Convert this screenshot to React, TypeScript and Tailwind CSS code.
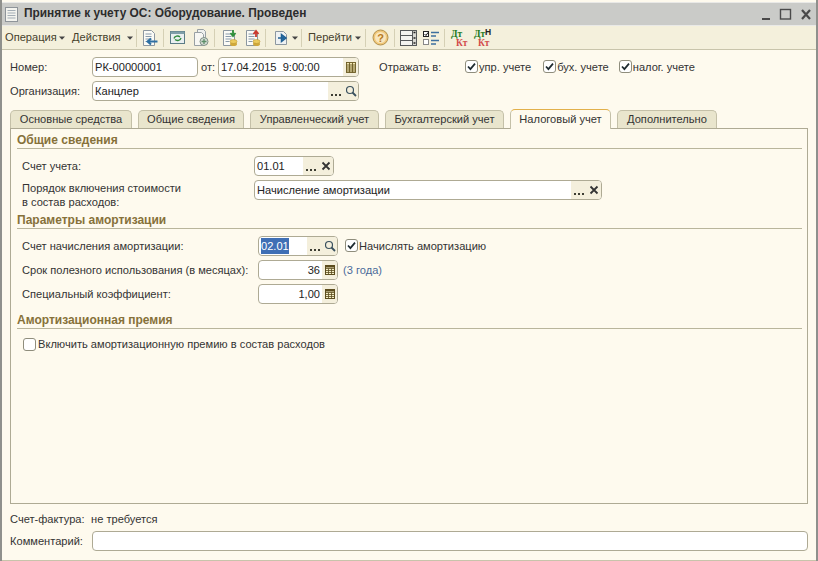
import React from "react";

const border = "border border-[#aeaa94]";

function Sep({ ml = "ml-0" }: { ml?: string }) {
  return <div className={`w-px h-[18px] bg-[#d5d0b5] shrink-0 ${ml}`} />;
}

function Caret() {
  return (
    <svg width="6" height="4" viewBox="0 0 6 4" className="shrink-0">
      <path d="M0 0.5h6L3 3.8z" fill="#444" />
    </svg>
  );
}

function Dots() {
  return (
    <svg width="12" height="12" viewBox="0 0 12 12">
      <path d="M1 9h2v2H1zM5 9h2v2H5zM9 9h2v2H9z" fill="#3d3d33" />
    </svg>
  );
}
function Lens() {
  return (
    <svg width="12" height="12" viewBox="0 0 12 12" fill="none" stroke="#39505e" strokeWidth="1.2">
      <circle cx="5" cy="5" r="3.500" />
      <path d="M7.500 7.500L11 11" strokeWidth="1.800" />
    </svg>
  );
}
function Cross() {
  return (
    <svg width="10" height="10" viewBox="0 0 10 10" fill="none" stroke="#333" strokeWidth="1.800">
      <path d="M1.500 1.500l7 7M8.500 1.500l-7 7" />
    </svg>
  );
}
function Calc() {
  return (
    <svg width="12" height="12" viewBox="0 0 12 12" fill="none" stroke="#5c4d1e">
      <rect x="1.500" y="1.500" width="9" height="9" fill="#f6efc8" />
      <path d="M1.500 4.500h9M1.500 6.500h9M1.500 8.500h9M4.500 4.500v6M7.500 4.500v6" strokeWidth="0.800" />
      <path d="M1.500 2.800h9" strokeWidth="1.600" />
    </svg>
  );
}
function DateIcon() {
  return (
    <svg width="12" height="13" viewBox="0 0 12 13" fill="none" stroke="#6a5a22" strokeWidth="0.900">
      <rect x="1.500" y="1.500" width="9" height="10" fill="#f3e8b5" />
      <path d="M1.500 4h9M1.500 6h9M1.500 8h9M1.500 10h9M4.500 1.500v10M7.500 1.500v10" />
    </svg>
  );
}

function Btn({ children }: { children: React.ReactNode }) {
  return (
    <div className="w-[15px] self-stretch flex items-center justify-center bg-[#f4efdc] shrink-0">
      {children}
    </div>
  );
}

function Field({
  w,
  children,
  btns,
  right,
  className = "",
}: {
  w: string;
  children?: React.ReactNode;
  btns?: React.ReactNode;
  right?: boolean;
  className?: string;
}) {
  return (
    <div className={`${w} h-[20px] flex items-stretch rounded-[4px] bg-white ${border} overflow-hidden shrink-0 ${className}`}>
      <div className={`flex-1 min-w-0 flex items-center whitespace-pre px-[2px] text-[#222] ${right ? "justify-end" : ""}`}>{children}</div>
      {btns}
    </div>
  );
}

function Check({ on, text, className = "" }: { on?: boolean; text: string; className?: string }) {
  return (
    <div className={`flex items-center gap-[1px] ${className}`}>
      <div className="w-[13px] h-[13px] rounded-[3px] border border-[#8f8d7c] bg-white flex items-center justify-center shrink-0">
        {on && (
          <svg width="9" height="9" viewBox="0 0 9 9" fill="none" stroke="#1d2a30" strokeWidth="1.700">
            <path d="M1 4.500l2.400 2.600L8 1.600" />
          </svg>
        )}
      </div>
      <span className="text-[#333] whitespace-nowrap">{text}</span>
    </div>
  );
}

function Section({ text, className = "" }: { text: string; className?: string }) {
  return (
    <div className={`ml-[6px] mr-[5px] h-[15px] border-b border-[#b9b59c] font-bold text-[12px] text-[#86713a] leading-[13px] ${className}`}>
      {text}
    </div>
  );
}

function Tab({ text, w, active }: { text: string; w: string; active?: boolean }) {
  return (
    <div
      className={`${w} flex items-center justify-center rounded-t-[5px] border border-[#c4c0a8] shrink-0 text-[#333] ${
        active
          ? "h-[20px] bg-[#fefaee] border-b-0 border-t-[#e2b04a] relative z-10 -mb-px"
          : "h-[18px] bg-[#e9e5cd] border-b-0"
      }`}
    >
      {text}
    </div>
  );
}

function DocIcon({ children }: { children?: React.ReactNode }) {
  return (
    <svg width="17" height="18" viewBox="0 0 17 18" className="shrink-0">
      <path d="M2.500 1.500h8l3 3v12h-11z" fill="#fbfbf6" stroke="#8c97a0" />
      <path d="M4.500 5h6M4.500 7.500h6M4.500 10h6M4.500 12.500h4" stroke="#7b8fa3" strokeWidth="0.900" />
      {children}
    </svg>
  );
}

function Coins() {
  return (
    <g>
      <ellipse cx="12.500" cy="15" rx="3.500" ry="2" fill="#d0a83a" />
      <ellipse cx="12.500" cy="12.500" rx="3.500" ry="2" fill="#eccb5c" stroke="#b48d26" strokeWidth="0.500" />
    </g>
  );
}

function Row({ children, className = "" }: { children: React.ReactNode; className?: string }) {
  return <div className={`flex items-center h-[20px] ${className}`}>{children}</div>;
}

export default function App() {
  return (
    <div
      className="w-[818px] h-[561px] overflow-hidden flex flex-col bg-[#fefaee] border-x-2 border-[#8f908c] text-[11.1px] text-[#333]"
      style={{ fontFamily: '"Liberation Sans", Arial, sans-serif' }}
    >
      {/* title */}
      <div className="h-[24px] mt-[2px] -mx-[2px] bg-[#cacbc8] border-t border-[#e9e9e7] border-b border-[#7e7f7a] flex items-center pl-[5px] shrink-0">
        <svg width="13" height="15" viewBox="0 0 13 15" className="shrink-0">
          <rect x="0.500" y="0.500" width="12" height="14" fill="#f3f3ee" stroke="#8e9499" />
          <path d="M2.500 3.500h8M2.500 6h8M2.500 8.500h8M2.500 11h8" stroke="#a3adb5" />
        </svg>
        <span className="ml-[6px] font-bold text-[11.9px] text-[#2c2c2c] whitespace-nowrap">
          Принятие к учету ОС: Оборудование. Проведен
        </span>
        <div className="ml-auto flex items-center mr-[6px] text-[#444]">
          <svg width="56" height="14" viewBox="0 0 56 14" fill="none" stroke="#4a4a4a">
            <path d="M6 12h8" strokeWidth="2" />
            <rect x="24.500" y="2.500" width="10" height="9.500" strokeWidth="1.400" />
            <path d="M46 3l8 9M54 3l-8 9" strokeWidth="2.200" />
          </svg>
        </div>
      </div>

      {/* toolbar */}
      <div className="h-[24px] bg-[#f4f0dc] border-b border-[#c8c4ab] flex items-center shrink-0 text-[#46412c] pl-[3px] whitespace-nowrap">
        <span className="w-[50px]">Операция</span>
        <span className="ml-[4px]"><Caret /></span>
        <span className="ml-[7px] w-[50px]">Действия</span>
        <span className="ml-[5px]"><Caret /></span>
        <Sep ml="ml-[3px]" />
        <span className="ml-[4px]">
          <DocIcon>
            <path d="M16.500 12.500H7M10 9.500l-3.500 3 3.500 3" stroke="#2d6fa3" strokeWidth="2" fill="none" />
          </DocIcon>
        </span>
        <Sep ml="ml-[5px]" />
        <svg width="15" height="15" viewBox="0 0 15 15" className="ml-[6px] shrink-0">
          <rect x="0.500" y="1.500" width="14" height="12" fill="#e9eff0" stroke="#5b7c86" />
          <rect x="0.500" y="1.500" width="14" height="2.500" fill="#7f9ea8" />
          <path d="M4 8.500a3.500 3 0 0 1 6-1.500M11 8a3.500 3 0 0 1-6 1.500" stroke="#2f8a3c" strokeWidth="1.300" fill="none" />
        </svg>
        <svg width="17" height="18" viewBox="0 0 17 18" className="ml-[8px] shrink-0">
          <path d="M4.500 0.500h6l2 2v11h-8z" fill="#eef0ee" stroke="#98a0a4" />
          <path d="M1.500 3.500h7l2 2v11h-9z" fill="#f7f7f3" stroke="#98a0a4" />
          <circle cx="11" cy="12.500" r="4" fill="#d6dcd6" stroke="#7e9085" />
          <path d="M11 10v5M8.500 12.500h5" stroke="#5b8e68" strokeWidth="1.300" />
        </svg>
        <Sep ml="ml-[4px]" />
        <span className="ml-[6px]">
          <DocIcon>
            <Coins />
            <path d="M12 1v5M9.500 4l2.500 3 2.500-3" stroke="#2f8f3a" strokeWidth="1.800" fill="none" />
          </DocIcon>
        </span>
        <span className="ml-[6px]">
          <DocIcon>
            <Coins />
            <path d="M12 8V3M9.500 5l2.500-3 2.500 3" stroke="#c9382d" strokeWidth="1.800" fill="none" />
          </DocIcon>
        </span>
        <Sep ml="ml-[4px]" />
        <svg width="16" height="16" viewBox="0 0 16 16" className="ml-[8px] shrink-0">
          <path d="M1.500 1.500h8l3 3v10h-11z" fill="#eef1f2" stroke="#8c97a0" />
          <path d="M4 8h6M7.500 4.500L12 8l-4.500 3.500z" stroke="#1f5f93" strokeWidth="1.500" fill="#2a78b5" />
        </svg>
        <span className="ml-[2px]"><Caret /></span>
        <Sep ml="ml-[3px]" />
        <span className="ml-[6px] w-[42px]">Перейти</span>
        <span className="ml-[5px]"><Caret /></span>
        <Sep ml="ml-[4px]" />
        <svg width="17" height="17" viewBox="0 0 17 17" className="ml-[6px] shrink-0">
          <circle cx="8.500" cy="8.500" r="7.500" fill="#f0c77a" stroke="#b3914b" />
          <circle cx="8.500" cy="8.500" r="5.500" fill="#f8e6bd" />
          <text x="8.500" y="12.500" textAnchor="middle" fontSize="11" fontWeight="700" fill="#b7791f" fontFamily="Liberation Sans">?</text>
        </svg>
        <Sep ml="ml-[5px]" />
        <svg width="17" height="16" viewBox="0 0 17 16" className="ml-[5px] shrink-0">
          <rect x="0.500" y="0.500" width="16" height="15" fill="#f4f4f0" stroke="#55585a" />
          <path d="M0.500 5.500h16M0.500 10.500h16" stroke="#55585a" />
          <path d="M12.500 0.500h4v15h-4z" fill="#d8d8d2" stroke="#55585a" />
          <path d="M13.500 2.500h2M13.500 8h2M13.500 13h2" stroke="#222" strokeWidth="1.500" />
        </svg>
        <svg width="17" height="16" viewBox="0 0 17 16" className="ml-[6px] shrink-0">
          <rect x="0.500" y="1.500" width="5" height="5" fill="#fff" stroke="#222" />
          <path d="M1.500 4l1.500 1.500 2-3" stroke="#111" fill="none" />
          <rect x="0.500" y="9.500" width="5" height="5" fill="#fff" stroke="#888" />
          <path d="M8 2.500h8M8 6h5M8 10.500h8M8 14h5" stroke="#3d6f9e" strokeWidth="1.600" />
        </svg>
        <Sep ml="ml-[4px]" />
        <div className="relative ml-[6px] w-[16px] h-[18px] shrink-0 font-bold text-[9.5px] leading-[8px]" style={{ fontFamily: '"Liberation Serif", serif' }}>
          <span className="absolute left-0 top-[1px] text-[#1f7a1f]">Дт</span>
          <span className="absolute left-[5px] top-[10px] text-[#d24a4a]">Кт</span>
        </div>
        <div className="relative ml-[7px] w-[17px] h-[18px] shrink-0 font-bold text-[9.5px] leading-[8px]" style={{ fontFamily: '"Liberation Serif", serif' }}>
          <span className="absolute left-0 top-[1px] text-[#1f7a1f]">Дт</span>
          <span className="absolute left-[11px] -top-[1px] text-[#222] text-[8.5px]" style={{ fontFamily: '"Liberation Sans", sans-serif' }}>Н</span>
          <span className="absolute left-[4px] top-[10px] text-[#d24a4a]">Кт</span>
        </div>
      </div>

      {/* header fields */}
      <div className="pl-[8px] pt-[7px] shrink-0">
        <Row>
          <span className="w-[82px] shrink-0">Номер:</span>
          <Field w="w-[106px]">РК-00000001</Field>
          <span className="w-[20px] pl-[3px] shrink-0">от:</span>
          <Field w="w-[141px]" btns={<Btn><DateIcon /></Btn>}>17.04.2015  9:00:00</Field>
          <span className="ml-[20px] w-[86px] shrink-0">Отражать в:</span>
          <Check on text="упр. учете" />
          <Check on text="бух. учете" className="ml-[12px]" />
          <Check on text="налог. учете" className="ml-[10px]" />
        </Row>
        <Row className="mt-[4px]">
          <span className="w-[82px] shrink-0">Организация:</span>
          <Field w="w-[267px]" btns={<><Btn><Dots /></Btn><Btn><Lens /></Btn></>}>Канцлер</Field>
        </Row>
      </div>

      {/* tabs */}
      <div className="pl-[8px] pt-[8px] flex items-end gap-[6px] shrink-0">
        <Tab text="Основные средства" w="w-[122px]" />
        <Tab text="Общие сведения" w="w-[106px]" />
        <Tab text="Управленческий учет" w="w-[129px]" />
        <Tab text="Бухгалтерский учет" w="w-[119px]" />
        <Tab text="Налоговый учет" w="w-[101px]" active />
        <Tab text="Дополнительно" w="w-[100px]" />
      </div>

      {/* panel */}
      <div className={`ml-[8px] mr-[8px] flex-1 min-h-0 ${border} pt-[5px]`}>
        <Section text="Общие сведения" className="mb-[7px]" />
        <Row className="pl-[11px]">
          <span className="w-[232px] shrink-0">Счет учета:</span>
          <Field w="w-[80px]" btns={<><Btn><Dots /></Btn><Btn><Cross /></Btn></>}>01.01</Field>
        </Row>
        <Row className="pl-[11px] mt-[4px] h-[33px] items-start">
          <span className="w-[232px] shrink-0 leading-[14px] mt-px">Порядок включения стоимости<br />в состав расходов:</span>
          <Field w="w-[348px]" btns={<><Btn><Dots /></Btn><Btn><Cross /></Btn></>}>Начисление амортизации</Field>
        </Row>
        <Section text="Параметры амортизации" className="mt-[1px] mb-[7px]" />
        <Row className="pl-[11px]">
          <span className="w-[236px] shrink-0">Счет начисления амортизации:</span>
          <Field w="w-[80px]" className="border-[#5f7fa8]" btns={<><Btn><Dots /></Btn><Btn><Lens /></Btn></>}>
            <span className="bg-[#3f6fb5] text-white">02.01</span>
          </Field>
          <Check on text="Начислять амортизацию" className="ml-[7px]" />
        </Row>
        <Row className="pl-[11px] mt-[4px]">
          <span className="w-[236px] shrink-0">Срок полезного использования (в месяцах):</span>
          <Field w="w-[80px]" right btns={<Btn><Calc /></Btn>}>36</Field>
          <span className="ml-[5px] text-[#4a6a9a]">(3 года)</span>
        </Row>
        <Row className="pl-[11px] mt-[4px]">
          <span className="w-[236px] shrink-0">Специальный коэффициент:</span>
          <Field w="w-[80px]" right btns={<Btn><Calc /></Btn>}>1,00</Field>
        </Row>
        <Section text="Амортизационная премия" className="mt-[10px] mb-[7px]" />
        <Check text="Включить амортизационную премию в состав расходов" className="ml-[12px] gap-[2px]" />
      </div>

      {/* footer */}
      <div className="pl-[8px] pr-[8px] pt-[7px] pb-[9px] shrink-0 border-b border-[#c8c4ab]">
        <div className="flex items-center h-[16px]">
          <span className="w-[81px] shrink-0">Счет-фактура:</span>
          <span>не требуется</span>
        </div>
        <Row className="mt-[4px]">
          <span className="w-[82px] shrink-0">Комментарий:</span>
          <Field w="flex-1" />
        </Row>
      </div>
    </div>
  );
}
